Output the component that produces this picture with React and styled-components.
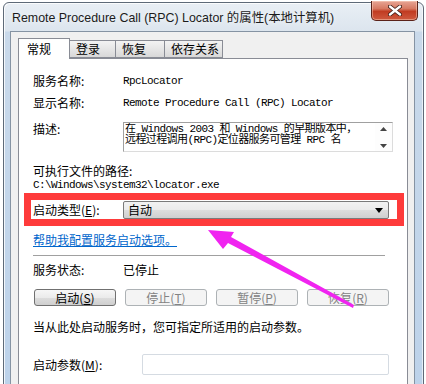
import React from 'react'
import styled, { createGlobalStyle } from 'styled-components'

const GlobalStyle = createGlobalStyle`
    html, body {
        margin: 0;
        padding: 0;
        background: #ffffff;
    }
    body {
        font-family: "Noto Sans CJK SC", "Liberation Sans", sans-serif;
        font-size: 12px;
        color: #000;
    }
`

const Screen = styled.div`
    position: relative;
    width: 426px;
    height: 384px;
    overflow: hidden;
    padding: 2px 0 0 3px;
    box-sizing: border-box;
`

const Window = styled.div`
    width: 421px;
    height: 400px;
    box-sizing: border-box;
    border: 1px solid #5e6a78;
    border-radius: 6px 6px 0 0;
    background: linear-gradient(to bottom, #e9eff5 0px, #dce5ee 28px, #c9d9ea 29px, #bcd2ea 100%);
    box-shadow: inset 1px 1px 0 rgba(255,255,255,0.8), inset -1px 0 0 rgba(255,255,255,0.6);
    display: flex;
    flex-direction: column;
`

const TitleBar = styled.div`
    height: 28px;
    display: flex;
    align-items: flex-start;
    justify-content: space-between;
    padding-left: 8px;
    position: relative;
`

const TitleText = styled.div`
    font-family: "Liberation Sans", "Noto Sans CJK SC", sans-serif;
    font-size: 12.4px;
    line-height: 14px;
    margin-top: 8px;
    color: #1b1b1b;
    text-shadow: 0 0 6px rgba(255,255,255,0.9);
`

const CloseButton = styled.div`
    width: 47px;
    height: 20px;
    margin-top: -2px;
    margin-right: 5px;
    box-sizing: border-box;
    border: 1px solid #5a2219;
    border-top: none;
    border-radius: 0 0 5px 5px;
    background: linear-gradient(to bottom, #e7a595 0%, #d77a63 40%, #c13c22 55%, #cf5a3f 100%);
    box-shadow: inset 0 0 0 1px rgba(255,220,200,0.45);
    display: flex;
    align-items: center;
    justify-content: center;
`

const Client = styled.div`
    flex: 1;
    margin: 0 8px 0 6px;
    border: 1px solid #8593a3;
    border-bottom: none;
    background: #f0f0f0;
    padding: 6px 6px 0 7px;
    display: flex;
    flex-direction: column;
`

const TabStrip = styled.div`
    display: flex;
    align-items: flex-end;
    height: 20px;
    position: relative;
    z-index: 1;
`

const Tab = styled.div`
    box-sizing: border-box;
    width: ${p => p.w}px;
    height: ${p => (p.active ? 21 : 18)}px;
    margin-bottom: ${p => (p.active ? -1 : 0)}px;
    border: 1px solid #898c95;
    border-bottom: ${p => (p.active ? 'none' : '1px solid #898c95')};
    margin-left: ${p => (p.first ? 0 : -1)}px;
    background: ${p => (p.active ? '#ffffff' : 'linear-gradient(to bottom, #f3f3f3, #e6e6e6 50%, #d8d8d8)')};
    font-size: 12px;
    line-height: 16px;
    padding-left: ${p => (p.active ? 8 : 6)}px;
    padding-top: ${p => (p.active ? 2 : 0)}px;
`

const TabPage = styled.div`
    flex: 1;
    background: #ffffff;
    border: 1px solid #898c95;
    border-bottom: none;
    padding: 15px 0 0 14px;
    display: flex;
    flex-direction: column;
`

const Row = styled.div`
    display: flex;
    align-items: ${p => p.align || 'center'};
    margin-top: ${p => p.mt || 0}px;
    line-height: 14px;
    min-height: 14px;
`

const Label = styled.div`
    width: ${p => p.w || 90}px;
    flex: none;
    white-space: nowrap;
`

const Mono = styled.div`
    font-family: "Liberation Mono", "Noto Sans CJK SC", monospace;
    font-size: 11px;
    letter-spacing: -0.6px;
    white-space: nowrap;
`

const TextArea = styled.div`
    width: 270px;
    height: 30px;
    box-sizing: border-box;
    border: 1px solid #a0a0a0;
    border-right-color: #dcdcdc;
    border-bottom-color: #dcdcdc;
    display: flex;
    overflow: hidden;
`

const TextAreaBody = styled.div`
    flex: 1;
    padding: 1px 0 0 1px;
    font-family: "Liberation Mono", "Noto Sans CJK SC", monospace;
    font-size: 11px;
    letter-spacing: -0.6px;
    line-height: 11px;
    white-space: nowrap;
    overflow: hidden;
`

const ScrollBar = styled.div`
    width: 17px;
    flex: none;
    display: flex;
    flex-direction: column;
    justify-content: space-between;
    align-items: center;
    padding: 4px 0 3px;
    box-sizing: border-box;
    background: #fdfdfd;
`

const Highlight = styled.div`
    margin: 1px 0 0 -9px;
    width: 380px;
    box-sizing: border-box;
    border: 7px solid #fe3b3b;
    background: #ffffff;
    height: 33px;
    display: flex;
    align-items: center;
    padding: 0 8px 0 2px;
`

const Combo = styled.div`
    width: 266px;
    height: 18px;
    margin-top: 1px;
    box-sizing: border-box;
    border: 1px solid #7a7a7a;
    border-radius: 2px;
    background: linear-gradient(to bottom, #f2f2f2, #ebebeb 50%, #dddddd 51%, #cfcfcf);
    display: flex;
    align-items: center;
    justify-content: space-between;
    padding: 0 5px 0 4px;
    line-height: 14px;
`

const LinkText = styled.a`
    color: #0066cc;
    text-decoration: underline;
    margin-top: 7px;
    line-height: 14px;
    cursor: pointer;
`

const Separator = styled.div`
    width: 352px;
    height: 1px;
    background: #a0a0a0;
    margin-top: 8px;
`

const ButtonRow = styled.div`
    display: flex;
    gap: 9px;
    margin: 12px 0 0 1px;
`

const Button = styled.div`
    width: 82px;
    height: 17px;
    box-sizing: border-box;
    border: 1px solid ${p => (p.disabled ? '#adb2b5' : '#707070')};
    border-radius: 3px;
    background: ${p => (p.disabled ? '#f4f4f4' : 'linear-gradient(to bottom, #f6f6f6, #ebebeb 50%, #dddddd 51%, #cfcfcf)')};
    color: ${p => (p.disabled ? '#838383' : '#000')};
    display: flex;
    align-items: center;
    justify-content: center;
    line-height: 14px;
`

const Input = styled.div`
    width: 247px;
    height: 21px;
    box-sizing: border-box;
    border: 1px solid #d5dbe2;
    border-radius: 2px;
    background: #fff;
`

const Arrow = styled.svg`
    position: absolute;
    left: 0;
    top: 0;
    pointer-events: none;
`

const Acc = ({ k }) => <>(<u>{k}</u>)</>

export default function App() {
    return <Screen>
        <GlobalStyle />
        <Window>
            <TitleBar>
                <TitleText>Remote Procedure Call (RPC) Locator 的属性(本地计算机)</TitleText>
                <CloseButton>
                    <svg width="14" height="11" viewBox="0 0 14 11">
                        <path d="M2 1.5 L12 9.5 M12 1.5 L2 9.5" stroke="#3a1a14" strokeWidth="4" strokeLinecap="round" />
                        <path d="M2 1.5 L12 9.5 M12 1.5 L2 9.5" stroke="#ffffff" strokeWidth="2.4" strokeLinecap="round" />
                    </svg>
                </CloseButton>
            </TitleBar>
            <Client>
                <TabStrip>
                    <Tab active first w={52}>常规</Tab>
                    <Tab w={47}>登录</Tab>
                    <Tab w={50}>恢复</Tab>
                    <Tab w={59}>依存关系</Tab>
                </TabStrip>
                <TabPage>
                    <Row>
                        <Label>服务名称:</Label>
                        <Mono>RpcLocator</Mono>
                    </Row>
                    <Row mt={8}>
                        <Label>显示名称:</Label>
                        <Mono>Remote Procedure Call (RPC) Locator</Mono>
                    </Row>
                    <Row mt={12} align="flex-start">
                        <Label>描述:</Label>
                        <TextArea>
                            <TextAreaBody>
                                在 Windows 2003 和 Windows 的早期版本中，<br />
                                远程过程调用(RPC)定位器服务可管理 RPC 名
                            </TextAreaBody>
                            <ScrollBar>
                                <svg width="7" height="4" viewBox="0 0 7 4"><path d="M0 4 L3.5 0 L7 4 Z" fill="#444" /></svg>
                                <svg width="7" height="4" viewBox="0 0 7 4"><path d="M0 0 L3.5 4 L7 0 Z" fill="#444" /></svg>
                            </ScrollBar>
                        </TextArea>
                    </Row>
                    <Row mt={12}>可执行文件的路径:</Row>
                    <Row>
                        <Mono>C:\Windows\system32\locator.exe</Mono>
                    </Row>
                    <Highlight>
                        <Label>启动类型<Acc k="E" />:</Label>
                        <Combo>
                            <span>自动</span>
                            <svg width="8" height="5" viewBox="0 0 8 5"><path d="M0 0 L8 0 L4 5 Z" fill="#000" /></svg>
                        </Combo>
                    </Highlight>
                    <Row>
                        <LinkText>帮助我配置服务启动选项。</LinkText>
                    </Row>
                    <Separator />
                    <Row mt={7}>
                        <Label>服务状态:</Label>
                        <span>已停止</span>
                    </Row>
                    <ButtonRow>
                        <Button>启动<Acc k="S" /></Button>
                        <Button disabled>停止<Acc k="T" /></Button>
                        <Button disabled>暂停<Acc k="P" /></Button>
                        <Button disabled>恢复<Acc k="R" /></Button>
                    </ButtonRow>
                    <Row mt={14}>当从此处启动服务时，您可指定所适用的启动参数。</Row>
                    <Row mt={20}>
                        <Label w={109}>启动参数<Acc k="M" />:</Label>
                        <Input />
                    </Row>
                </TabPage>
            </Client>
        </Window>
        <Arrow width="426" height="384" viewBox="0 0 426 384">
            <polygon points="208,230 234,232 231,237 354,305 353,308 228,243 223,249" fill="#f024f0" />
        </Arrow>
    </Screen>
}
